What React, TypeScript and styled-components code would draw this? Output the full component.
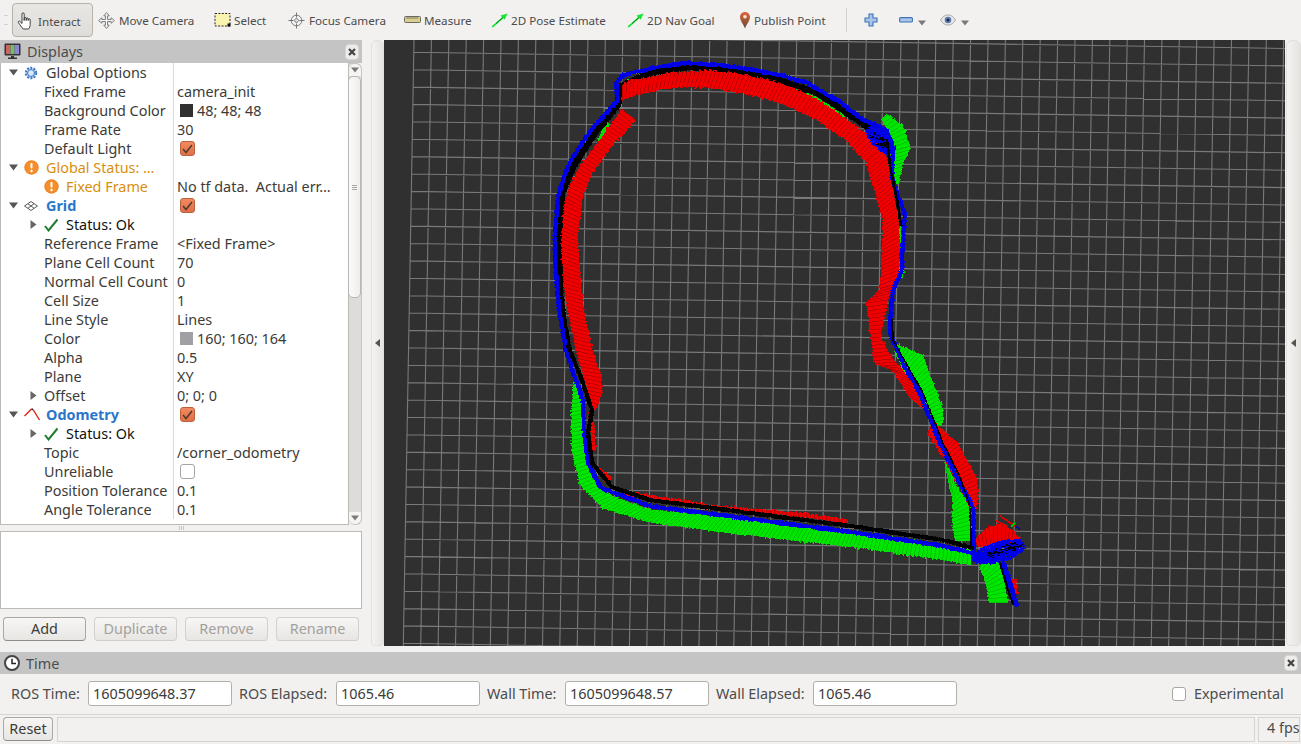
import React from "react";
import styled, { createGlobalStyle } from "styled-components";

type P = [number, number];

const Global = createGlobalStyle`
  html, body { margin: 0; padding: 0; background: #f2f1f0; overflow: hidden; }
  * { box-sizing: border-box; }
  body { font-family: "Noto Sans", "Open Sans", sans-serif; font-size: 14.4px; color: #3c3b37; }
`;

/* ---------- trajectory generation ---------- */
let seed = 12345;
const rnd = () => {
  seed = (seed * 16807) % 2147483647;
  return seed / 2147483647;
};
const length = (pts: P[]) => {
  let l = 0;
  for (let i = 1; i < pts.length; i++) l += Math.hypot(pts[i][0] - pts[i - 1][0], pts[i][1] - pts[i - 1][1]);
  return l;
};
const resample = (pts: P[], n: number): P[] => {
  const total = length(pts);
  const out: P[] = [];
  let seg = 0;
  let acc = 0;
  for (let k = 0; k < n; k++) {
    const target = (total * k) / Math.max(1, n - 1);
    while (seg < pts.length - 2) {
      const d = Math.hypot(pts[seg + 1][0] - pts[seg][0], pts[seg + 1][1] - pts[seg][1]);
      if (acc + d >= target) break;
      acc += d;
      seg++;
    }
    const d = Math.hypot(pts[seg + 1][0] - pts[seg][0], pts[seg + 1][1] - pts[seg][1]) || 1;
    const t = Math.min(1, (target - acc) / d);
    out.push([pts[seg][0] + (pts[seg + 1][0] - pts[seg][0]) * t, pts[seg][1] + (pts[seg + 1][1] - pts[seg][1]) * t]);
  }
  return out;
};
const seg = (a: P, b: P) => `M${a[0].toFixed(1)} ${a[1].toFixed(1)}L${b[0].toFixed(1)} ${b[1].toFixed(1)}`;
const ribbon = (a: P[], b: P[], step = 1, jit = 2.6) => {
  const n = Math.round((length(a) + length(b)) / 2 / step);
  const ra = resample(a, n);
  const rb = resample(b, n);
  let main = "";
  let dark = "";
  ra.forEach((p, i) => {
    const q = rb[i];
    const dx = q[0] - p[0];
    const dy = q[1] - p[1];
    const l = Math.hypot(dx, dy) || 1;
    const e1 = rnd() * rnd() * jit;
    const e2 = rnd() * rnd() * jit;
    const s = seg([p[0] - (dx / l) * e1, p[1] - (dy / l) * e1], [q[0] + (dx / l) * e2, q[1] + (dy / l) * e2]);
    main += s;
    if (i % 4 === 0) dark += s;
  });
  return { main, dark };
};
const band = (pts: P[], width: number, jit = 1.2, step = 1) => {
  const n = Math.round(length(pts) / step);
  const r = resample(pts, n);
  let d = "";
  r.forEach((p, i) => {
    const a = r[Math.max(0, i - 3)];
    const b = r[Math.min(n - 1, i + 3)];
    const l = Math.hypot(b[0] - a[0], b[1] - a[1]) || 1;
    const nx = -(b[1] - a[1]) / l;
    const ny = (b[0] - a[0]) / l;
    const h1 = width / 2 + rnd() * jit;
    const h2 = width / 2 + rnd() * jit;
    d += seg([p[0] - nx * h1, p[1] - ny * h1], [p[0] + nx * h2, p[1] + ny * h2]);
  });
  return d;
};
const scatter = (cx: number, cy: number, rx: number, ry: number, tilt: number, count: number) => {
  let d = "";
  for (let i = 0; i < count; i++) {
    const t = rnd() * Math.PI * 2;
    const r = Math.sqrt(rnd());
    const u = Math.cos(t) * r * rx;
    const v = Math.sin(t) * r * ry;
    const x = cx + u;
    const y = cy + v + u * tilt;
    d += seg([x, y], [x + 1 + rnd() * 2, y + rnd() * 3 - 1.5]);
  }
  return d;
};

const blueLoop: P[] = [
  [973, 553], [943, 546], [850, 532], [750, 519], [650, 506], [601, 488], [588, 463], [584, 430], [583, 400], [573, 372], [566, 350], [559, 310], [555, 263], [555, 237], [558, 197], [564, 177], [571, 160], [591, 130], [618, 100], [616, 83], [623, 75], [653, 68], [687, 63], [720, 65], [753, 70], [780, 75], [807, 83], [840, 102], [860, 118], [887, 130], [893, 153], [892, 177], [898, 197], [905, 213], [902, 250], [902, 270], [893, 290], [891, 310], [890, 333], [903, 363], [920, 393], [940, 443], [957, 477], [973, 507], [974, 560],
];
const blackUpper: P[] = [
  [568, 345], [563, 320], [560, 290], [559.5, 237], [562, 193], [573, 167], [595, 133], [618, 105], [620, 87], [650, 73], [687, 67], [727, 70], [773, 78], [817, 93], [853, 117], [887, 140],
];
const blackBottom: P[] = [
  [973, 548], [943, 540], [850, 526], [750, 513], [650, 500], [612, 487], [592, 463], [588, 433], [592, 410], [583, 383], [568, 345],
];
const blackRight: P[] = [[887, 140], [890, 167], [897, 200], [901, 225]];
const blackLower: P[] = [[892, 320], [893, 340], [906, 363], [923, 393], [943, 443], [960, 477], [970, 507], [971, 545]];

const reds: [P[], P[]][] = [
  [
    [[623, 85], [633, 80], [673, 73], [707, 71], [740, 74], [773, 82], [793, 88], [817, 100], [840, 115], [860, 130], [883, 147]],
    [[622, 100], [640, 93], [673, 87], [707, 87], [740, 92], [773, 100], [813, 117], [847, 140], [867, 162]],
  ],
  [
    [[883, 147], [887, 160], [893, 190], [898, 220], [900, 250], [898, 283], [887, 300]],
    [[867, 162], [873, 183], [883, 220], [883, 250], [880, 290], [867, 303]],
  ],
  [
    [[622, 110], [600, 140], [580, 167], [568, 190], [563, 217], [562, 250], [565, 290], [572, 330], [577, 350], [585, 380], [593, 408]],
    [[635, 120], [612, 145], [592, 172], [582, 197], [577, 237], [580, 280], [585, 320], [592, 350], [600, 375], [602, 393], [595, 410]],
  ],
  [[[887, 300], [880, 337], [893, 360], [913, 383], [922, 407]], [[867, 303], [873, 347], [875, 363], [893, 370], [910, 397]]],
  [[[933, 422], [957, 443], [977, 480], [978, 500], [975, 510]], [[928, 433], [943, 455], [962, 490], [973, 510]]],
  [[[975, 540], [987, 528], [1003, 523], [1020, 538]], [[977, 545], [985, 547], [993, 548], [1018, 540]]],
  [[[597, 467], [612, 478]], [[600, 474], [605, 482]]],
  [[[589, 413], [591, 430], [592, 450]], [[593, 413], [594, 430], [595, 450]]],
  [[[627, 492], [717, 506], [800, 513], [847, 520]], [[627, 495], [717, 509], [800, 516], [847, 523]]],
  [[[1011, 580], [1013, 593]], [[1016, 580], [1017, 593]]],
];
const greens: [P[], P[]][] = [
  [
    [[574, 383], [572, 417], [572, 450], [580, 483], [603, 508], [650, 522], [717, 531], [783, 539], [850, 546], [893, 552], [970, 564]],
    [[579, 383], [584, 417], [584, 450], [594, 477], [611, 496], [650, 510], [717, 517], [783, 525], [850, 532], [893, 538], [970, 550]],
  ],
  [[[897, 345], [922, 355], [943, 410], [942, 425]], [[895, 352], [905, 372], [925, 405], [938, 425]]],
  [[[945, 462], [958, 490], [970, 505], [972, 540]], [[948, 477], [953, 500], [953, 520], [955, 540]]],
  [[[985, 558], [1000, 564], [1008, 602]], [[980, 568], [985, 577], [990, 602]]],
  [[[887, 115], [902, 125], [910, 147], [903, 163], [898, 183]], [[882, 120], [888, 130], [890, 147], [893, 163], [896, 183]]],
  [[[793, 86], [817, 97], [843, 112]], [[790, 90], [813, 102], [845, 122]]],
  [[[626, 82], [640, 77]], [[626, 88], [640, 82]]],
  [[[607, 122], [598, 140]], [[610, 125], [601, 142]]],
  [[[897, 223], [900, 277]], [[900, 223], [903, 277]]],
  [[[563, 205], [563, 215]], [[565, 205], [565, 215]]],
];

const redPaths = reds.map(([a, b]) => ribbon(a, b));
const greenPaths = greens.map(([a, b]) => ribbon(a, b));
const bluePath = band(blueLoop, 2.8, 1.4);
const blackUpperPath = band(blackUpper, 5.5, 1);
const blackBottomPath = band(blackBottom, 3.2, 0.9);
const blackRightPath = band(blackRight, 1.8, 0.8);
const blackLowerPath = band(blackLower, 1, 0.5);
const lowerBlue = band([[1003, 563], [1012, 590], [1017, 606]], 3.5, 1.5);
const lowerBlack = band([[1000, 563], [1008, 590], [1013, 604]], 1.5, 0.5);
const blobBlue = scatter(998, 552, 26, 10, -0.25, 800);
const blobBlack = scatter(1003, 550, 17, 5, -0.3, 70);
const clusterBlue = scatter(880, 140, 14, 11, 0.6, 420);
const clusterBlack = scatter(878, 140, 9, 6, 0.6, 35);
const gridD = (() => {
  let d = "";
  for (let i = 0; i <= 50; i++) d += `M${(414 + 17.394 * i).toFixed(1)} 40L${(403.3 + 17.394 * i).toFixed(1)} 646`;
  for (let j = -1; j <= 34; j++) {
    const y0 = 52.3 + 17.388 * j;
    const xl = 414 - 0.0177 * (y0 - 40);
    d += `M${xl.toFixed(1)} ${(y0 + 0.0156 * (xl - 414)).toFixed(1)}L1285 ${(y0 + 0.0156 * (1285 - 414)).toFixed(1)}`;
  }
  return d;
})();

/* ---------- layout ---------- */
const Page = styled.div`
  width: 1301px;
  height: 744px;
  display: flex;
  flex-direction: column;
  overflow: hidden;
  background: #f2f1f0;
`;
const Toolbar = styled.div`
  height: 40px;
  display: flex;
  align-items: center;
  flex: none;
`;
const Grip = styled.div`
  width: 12px;
  height: 10px;
  padding-left: 4px;
  display: flex;
  flex-direction: column;
  justify-content: space-between;
  &::before, &::after { content: ""; width: 4px; height: 1px; background: #d5d3cf; }
`;
const ToolButton = styled.div<{ $w: number; $active?: boolean; $gap?: number }>`
  width: ${(p) => p.$w}px;
  height: 34px;
  display: flex;
  align-items: center;
  gap: ${(p) => p.$gap ?? 4}px;
  padding-left: ${(p) => (p.$active ? 4 : 5)}px;
  white-space: nowrap;
  color: #4c4c4c;
  font-size: 11.65px;
  flex: none;
  ${(p) =>
    p.$active &&
    `border: 1px solid #b5b2ac; border-radius: 4px; background: linear-gradient(#e9e7e4, #dfddd9); padding-top: 2px;`}
`;
const IconSlot = styled.span`
  width: 17px;
  height: 18px;
  flex: none;
  display: flex;
  align-items: center;
  justify-content: center;
`;
const ToolSep = styled.div`
  width: 1px;
  height: 24px;
  background: #d4d2ce;
  margin: 0 17px 0 5px;
  flex: none;
`;
const ToolIcon = styled.div<{ $w: number }>`
  width: ${(p) => p.$w}px;
  flex: none;
  display: flex;
  align-items: center;
  gap: 5px;
`;
const DropSlot = styled.span`
  display: flex;
  margin-top: 6px;
`;
const Main = styled.div`
  height: 606px;
  margin-bottom: 6px;
  display: flex;
  flex: none;
`;
const LeftPanel = styled.div`
  width: 362px;
  flex: none;
  display: flex;
  flex-direction: column;
`;
const DockTitle = styled.div<{ $h: number }>`
  height: ${(p) => p.$h}px;
  flex: none;
  background: #c4c4c4;
  display: flex;
  align-items: center;
  padding: 0 3px 0 4px;
  gap: 6px;
  color: #4c4c4c;
`;
const CloseBox = styled.div`
  margin-left: auto;
  width: 14px;
  height: 16px;
  border-radius: 4px;
  background: #efedeb;
  border: 1px solid #d8d6d2;
  display: flex;
  align-items: center;
  justify-content: center;
`;
const TreeFrame = styled.div`
  height: 462px;
  flex: none;
  display: flex;
`;
const Tree = styled.div`
  width: 349px;
  flex: none;
  background: #fff;
  border: 1px solid #bdbab5;
  border-top: 0;
  overflow: hidden;
`;
const Row = styled.div`
  height: 19px;
  display: grid;
  grid-template-columns: 173px 1fr;
`;
const NameCell = styled.div<{ $depth: number }>`
  display: flex;
  align-items: center;
  padding-left: ${(p) => p.$depth * 20 + 4}px;
  border-right: 1px solid #dcdad6;
  white-space: nowrap;
  overflow: hidden;
`;
const Expander = styled.span`
  width: 16px;
  flex: none;
  display: flex;
  justify-content: center;
  align-items: center;
`;
const IconCell = styled.span`
  width: 25px;
  height: 19px;
  flex: none;
  display: flex;
  align-items: center;
  padding-left: 3px;
`;
const Label = styled.span<{ $tone?: string; $plain?: boolean }>`
  white-space: pre;
  margin-left: ${(p) => (p.$plain ? 3 : 0)}px;
  color: ${(p) => (p.$tone === "warn" ? "#d98f0e" : p.$tone === "blue" ? "#2a76cc" : p.$tone === "ok" ? "#111" : "#3c3b37")};
  font-weight: ${(p) => (p.$tone === "blue" ? 700 : 400)};
`;
const ValueCell = styled.div`
  display: flex;
  align-items: center;
  padding-left: 3px;
  white-space: pre;
  overflow: hidden;
`;
const Swatch = styled.span<{ $c: string }>`
  width: 13px;
  height: 13px;
  background: ${(p) => p.$c};
  margin: 0 4px 0 3px;
  flex: none;
`;
const CheckBox = styled.span<{ $on?: boolean }>`
  width: 15px;
  height: 15px;
  margin-left: 3px;
  border-radius: 3px;
  flex: none;
  display: flex;
  align-items: center;
  justify-content: center;
  border: 1px solid ${(p) => (p.$on ? "#b9603c" : "#a9a6a1")};
  background: ${(p) => (p.$on ? "linear-gradient(#f08a60, #e26f45)" : "#fff")};
`;
const Scrollbar = styled.div`
  width: 13px;
  flex: none;
  display: flex;
  flex-direction: column;
  border: 1px solid #c9c6c1;
  border-left: 0;
  border-radius: 0 6px 6px 6px;
  background: #dedcd8;
`;
const ScrollEnd = styled.div<{ $flip?: boolean }>`
  height: 12px;
  background: #f6f5f4;
  flex: none;
  display: flex;
  align-items: center;
  justify-content: center;
  border-radius: ${(p) => (p.$flip ? "0 0 6px 6px" : "6px 6px 0 0")};
`;
const ScrollThumb = styled.div`
  height: 222px;
  flex: none;
  border: 1px solid #b9b6b1;
  border-radius: 5px;
  background: linear-gradient(90deg, #fafafa, #efedeb);
  display: flex;
  flex-direction: column;
  justify-content: center;
  align-items: center;
  gap: 1px;
  margin-left: -1px;
  width: 13px;
`;
const GripLine = styled.span`
  width: 5px;
  height: 1px;
  background: #a9a6a1;
`;
const ScrollRest = styled.div`
  flex: 1;
`;
const Splitter = styled.div`
  height: 6px;
  flex: none;
  display: flex;
  justify-content: center;
  gap: 1px;
  align-items: center;
  & > span { width: 1px; height: 4px; background: #c9c6c1; }
`;
const DescBox = styled.div`
  height: 78px;
  flex: none;
  background: #fff;
  border: 1px solid #bdbab5;
`;
const ButtonRow = styled.div`
  margin-top: 8px;
  display: flex;
  gap: 8px;
  padding-left: 3px;
`;
const PushButton = styled.div<{ $off?: boolean; $w?: number; $h?: number }>`
  width: ${(p) => p.$w ?? 83}px;
  height: ${(p) => p.$h ?? 24}px;
  flex: none;
  display: flex;
  align-items: center;
  justify-content: center;
  padding-bottom: 1px;
  border-radius: 4px;
  border: 1px solid ${(p) => (p.$off ? "#d3d1cd" : "#aaa7a2")};
  border-bottom-color: ${(p) => (p.$off ? "#cfcdc9" : "#8f8c87")};
  background: linear-gradient(#f7f6f5, #e8e6e3);
  color: ${(p) => (p.$off ? "#a3a19d" : "#3c3b37")};
`;
const SideHandle = styled.div<{ $w: number; $pad: number }>`
  width: ${(p) => p.$w}px;
  flex: none;
  padding-left: ${(p) => p.$pad}px;
`;
const HandleBar = styled.div`
  height: 100%;
  border: 1px solid #e2e0dc;
  border-radius: 6px 6px 4px 4px;
  background: linear-gradient(90deg, #f4f3f2, #e6e4e1);
  display: flex;
  align-items: center;
  justify-content: center;
`;
const Viewport = styled.svg`
  width: 901px;
  height: 606px;
  flex: none;
  display: block;
  background: #303030;
`;
const TimeRow = styled.div`
  margin-top: 7px;
  height: 25px;
  flex: none;
  display: flex;
  align-items: center;
  padding-left: 11px;
`;
const TimeLabel = styled.span<{ $w: number }>`
  width: ${(p) => p.$w}px;
  flex: none;
  color: #4c4c4c;
  white-space: nowrap;
`;
const TimeField = styled.div`
  width: 144px;
  height: 25px;
  flex: none;
  margin-right: 7px;
  background: #fff;
  border: 1px solid #b3b0ab;
  border-radius: 3px;
  padding-left: 4px;
  display: flex;
  align-items: center;
  color: #3c3b37;
`;
const Experimental = styled.div`
  margin-left: auto;
  width: 129px;
  display: flex;
  align-items: center;
  gap: 8px;
  color: #4c4c4c;
`;
const PlainBox = styled.span`
  width: 14px;
  height: 14px;
  border: 1px solid #a9a6a1;
  border-radius: 3px;
  background: #fff;
  flex: none;
`;
const StatusBar = styled.div`
  margin-top: 8px;
  border-top: 1px solid #d6d4d0;
  height: 30px;
  flex: none;
  display: flex;
  padding: 2px 1px 0 3px;
`;
const StatusField = styled.div`
  margin-left: 4px;
  width: 1198px;
  height: 25px;
  border: 1px solid #d6d4d0;
  flex: none;
`;
const FpsBox = styled.div`
  margin-left: 3px;
  width: 42px;
  height: 25px;
  border: 1px solid #d6d4d0;
  flex: none;
  padding: 0 0 4px 8px;
  display: flex;
  align-items: center;
  white-space: nowrap;
  color: #4c4c4c;
`;

/* ---------- icons ---------- */
const Hand = () => (
  <svg width="17" height="18" viewBox="0 0 17 18" fill="#fff" stroke="#222" strokeWidth="0.85" strokeLinejoin="round">
    <path d="M5 2a1.100 1.100 0 0 1 2.200 0v6.500V6.400a1 1 0 0 1 2 0v2.100V7a1 1 0 0 1 2 0v1.500V7.800a1 1 0 0 1 2 0v4.700c0 2-.8 3.500-1.700 4.500H6.200C5 15.500 3 13 1.400 10.600c-.6-1 .6-2 1.400-1.200L5 11.500z" />
  </svg>
);
const MoveIcon = () => (
  <svg width="17" height="17" viewBox="0 0 16 16" fill="#f4f4f4" stroke="#777" strokeWidth="0.9">
    <path d="M8 .6 5.4 3.6H7V7H3.6V5.4L.6 8l3 2.6V9H7v3.4H5.4L8 15.400l2.600-3H9V9h3.400v1.600l3-2.600-3-2.600V7H9V3.600h1.600z" />
  </svg>
);
const SelectIcon = () => (
  <svg width="17" height="16" viewBox="0 0 17 16">
    <rect x="1" y="1.5" width="15" height="12.5" fill="#fbf4b0" stroke="#222" strokeDasharray="2 1.4" />
    <rect x="13.5" y="11.5" width="3" height="3" fill="#111" />
  </svg>
);
const FocusIcon = () => (
  <svg width="17" height="17" viewBox="0 0 17 17" fill="none" stroke="#777">
    <circle cx="8.5" cy="8.5" r="5.3" fill="#f5f5f5" />
    <path d="M8.5 .5v5M8.5 11.5v5M.5 8.5h5M11.5 8.5h5" />
    <path d="M8.5 6 11 8.5 8.5 11 6 8.5z" fill="#ddd" />
  </svg>
);
const RulerIcon = () => (
  <svg width="17" height="8" viewBox="0 0 17 8">
    <rect x=".5" y=".5" width="16" height="6" rx="1" fill="#d9d08e" stroke="#6b6a60" />
    <path d="M3 1v2M5 1v2M7 1v2M9 1v2M11 1v2M13 1v2" stroke="#6b6a60" strokeWidth=".8" />
  </svg>
);
const ArrowIcon = () => (
  <svg width="17" height="15" viewBox="0 0 17 15">
    <path d="M.5 13.500 11 4.300 9.600 2.600 16.500.5l-2.800 6.200-1.400-1.400L2 14.500z" fill="#14e830" />
    <path d="M5 10.500 12 4.500" stroke="#0a7a1e" strokeWidth=".9" />
  </svg>
);
const PinIcon = () => (
  <svg width="14" height="18" viewBox="0 0 14 18">
    <defs>
      <linearGradient id="pin" x1="0" y1="0" x2="0" y2="1">
        <stop offset="0" stopColor="#e2663a" />
        <stop offset="1" stopColor="#5f4a35" />
      </linearGradient>
    </defs>
    <path d="M7 1C4 1 2 3.200 2 6c0 3.600 3.600 7.600 5 11.500C8.400 13.600 12 9.600 12 6c0-2.800-2-5-5-5z" fill="url(#pin)" />
    <circle cx="7" cy="5.800" r="1.800" fill="#f6e3d6" />
  </svg>
);
const PlusIcon = () => (
  <svg width="14" height="14" viewBox="0 0 14 14">
    <path d="M5 1h4v4h4v4H9v4H5V9H1V5h4z" fill="#a9c6ea" stroke="#3d72b4" strokeWidth="1.1" />
  </svg>
);
const MinusIcon = () => (
  <svg width="14" height="6" viewBox="0 0 14 6">
    <rect x=".6" y=".6" width="12.8" height="4.4" rx="1" fill="#a9c6ea" stroke="#3d72b4" strokeWidth="1.1" />
  </svg>
);
const EyeIcon = () => (
  <svg width="16" height="12" viewBox="0 0 16 12">
    <path d="M.5 6C3 2 5.500 1 8 1s5 1 7.500 5C13 10 10.500 11 8 11S3 10 .5 6z" fill="#e6e6e6" stroke="#a8a8a8" />
    <circle cx="8" cy="6" r="3.300" fill="#5f7fb4" />
    <circle cx="8" cy="6" r="1.500" fill="#1b2a4a" />
  </svg>
);
const Drop = () => (
  <svg width="8" height="6" viewBox="0 0 8 6">
    <path d="M0 .5h8L4 5.500z" fill="#7a7a7a" />
  </svg>
);
const Monitor = () => (
  <svg width="17" height="17" viewBox="0 0 17 17">
    <rect x=".5" y=".5" width="16" height="12" rx="1" fill="#333" />
    <rect x="2" y="2" width="4.500" height="9" fill="#c66" />
    <rect x="6.500" y="2" width="4" height="9" fill="#7b6" />
    <rect x="10.500" y="2" width="4.500" height="9" fill="#88c" />
    <path d="M7 13h3v1.500h3V16H4v-1.500h3z" fill="#333" />
  </svg>
);
const Clock = () => (
  <svg width="16" height="16" viewBox="0 0 16 16">
    <circle cx="8" cy="8" r="7" fill="#fff" stroke="#444" strokeWidth="2" />
    <path d="M8 3.800V8.500h4" fill="none" stroke="#222" strokeWidth="1.500" />
  </svg>
);
const Cross = () => (
  <svg width="8" height="8" viewBox="0 0 8 8">
    <path d="M1 1l6 6M7 1 1 7" stroke="#444" strokeWidth="2.200" />
  </svg>
);
const Down = () => (
  <svg width="9" height="7" viewBox="0 0 9 7">
    <path d="M0 .5h9L4.500 6.500z" fill="#555" />
  </svg>
);
const Right = () => (
  <svg width="7" height="9" viewBox="0 0 7 9">
    <path d="M.5 0v9l6-4.500z" fill="#666" />
  </svg>
);
const Gear = () => (
  <svg width="14" height="14" viewBox="0 0 14 14">
    <circle cx="7" cy="7" r="5.200" fill="#cfe0f5" stroke="#3c78c8" strokeWidth="2" strokeDasharray="2 1.300" />
    <circle cx="7" cy="7" r="3.500" fill="none" stroke="#3c78c8" />
    <circle cx="7" cy="7" r="2" fill="#dfeafa" />
  </svg>
);
const Warn = () => (
  <svg width="15" height="15" viewBox="0 0 15 15">
    <circle cx="7.500" cy="7.500" r="7.200" fill="#f08020" />
    <circle cx="7.500" cy="7.500" r="6" fill="#f58f2e" />
    <rect x="6.500" y="3" width="2" height="5.500" rx=".8" fill="#fff" />
    <circle cx="7.500" cy="11" r="1.200" fill="#fff" />
  </svg>
);
const GridIcon = () => (
  <svg width="14" height="10" viewBox="0 0 14 10" fill="none" stroke="#444" strokeWidth=".9">
    <path d="M7 .5 13.500 5 7 9.500.5 5zM4 2.800 10 7.200M10 2.800 4 7.200" />
  </svg>
);
const OdomIcon = () => (
  <svg width="17" height="13" viewBox="0 0 17 13" fill="none" strokeWidth="1.4">
    <path d="M.5 8 7.500 1" stroke="#f02010" />
    <path d="M9 1.500 15.500 12" stroke="#e02010" />
    <path d="M7.500 1 9 1.500" stroke="#222" />
  </svg>
);
const Tick = () => (
  <svg width="15" height="14" viewBox="0 0 15 14">
    <path d="M1 8l3.500 4.500L13.500 1.500" fill="none" stroke="#1e7d2e" strokeWidth="2" />
  </svg>
);
const BoxTick = () => (
  <svg width="11" height="10" viewBox="0 0 11 10">
    <path d="M1 5l3 3.500L10 1" fill="none" stroke="#4c3a32" strokeWidth="1.500" />
  </svg>
);
const Tri = () => (
  <svg width="5" height="8" viewBox="0 0 5 8">
    <path d="M5 0v8L0 4z" fill="#55534f" />
  </svg>
);

/* ---------- data ---------- */
type RowDef = {
  name: string;
  depth: number;
  open?: "down" | "right";
  icon?: React.ReactNode;
  tone?: string;
  value?: string;
  swatch?: string;
  check?: "on" | "off";
};
const rows: RowDef[] = [
  { name: "Global Options", depth: 0, open: "down", icon: <Gear /> },
  { name: "Fixed Frame", depth: 1, value: "camera_init" },
  { name: "Background Color", depth: 1, value: "48; 48; 48", swatch: "#303030" },
  { name: "Frame Rate", depth: 1, value: "30" },
  { name: "Default Light", depth: 1, check: "on" },
  { name: "Global Status: …", depth: 0, open: "down", icon: <Warn />, tone: "warn" },
  { name: "Fixed Frame", depth: 1, icon: <Warn />, tone: "warn", value: "No tf data.  Actual err…" },
  { name: "Grid", depth: 0, open: "down", icon: <GridIcon />, tone: "blue", check: "on" },
  { name: "Status: Ok", depth: 1, open: "right", icon: <Tick />, tone: "ok" },
  { name: "Reference Frame", depth: 1, value: "<Fixed Frame>" },
  { name: "Plane Cell Count", depth: 1, value: "70" },
  { name: "Normal Cell Count", depth: 1, value: "0" },
  { name: "Cell Size", depth: 1, value: "1" },
  { name: "Line Style", depth: 1, value: "Lines" },
  { name: "Color", depth: 1, value: "160; 160; 164", swatch: "#a0a0a4" },
  { name: "Alpha", depth: 1, value: "0.5" },
  { name: "Plane", depth: 1, value: "XY" },
  { name: "Offset", depth: 1, open: "right", value: "0; 0; 0" },
  { name: "Odometry", depth: 0, open: "down", icon: <OdomIcon />, tone: "blue", check: "on" },
  { name: "Status: Ok", depth: 1, open: "right", icon: <Tick />, tone: "ok" },
  { name: "Topic", depth: 1, value: "/corner_odometry" },
  { name: "Unreliable", depth: 1, check: "off" },
  { name: "Position Tolerance", depth: 1, value: "0.1" },
  { name: "Angle Tolerance", depth: 1, value: "0.1" },
];

const tools: { label: string; w: number; icon: React.ReactNode; active?: boolean; gap?: number }[] = [
  { label: "Interact", w: 81, icon: <Hand />, active: true },
  { label: "Move Camera", w: 116, icon: <MoveIcon /> },
  { label: "Select", w: 74, icon: <SelectIcon />, gap: 3 },
  { label: "Focus Camera", w: 116, icon: <FocusIcon /> },
  { label: "Measure", w: 87, icon: <RulerIcon />, gap: 3 },
  { label: "2D Pose Estimate", w: 136, icon: <ArrowIcon />, gap: 3 },
  { label: "2D Nav Goal", w: 109, icon: <ArrowIcon />, gap: 3 },
  { label: "Publish Point", w: 110, icon: <PinIcon />, gap: 1 },
];

const TreeRow = ({ r }: { r: RowDef }) => (
  <Row>
    <NameCell $depth={r.depth}>
      <Expander>{r.open === "down" ? <Down /> : r.open === "right" ? <Right /> : null}</Expander>
      {r.icon ? <IconCell>{r.icon}</IconCell> : null}
      <Label $tone={r.tone} $plain={!r.icon}>
        {r.name}
      </Label>
    </NameCell>
    <ValueCell>
      {r.swatch ? <Swatch $c={r.swatch} /> : null}
      {r.check ? <CheckBox $on={r.check === "on"}>{r.check === "on" ? <BoxTick /> : null}</CheckBox> : null}
      {r.value ? <Label>{r.value}</Label> : null}
    </ValueCell>
  </Row>
);

const Scene = () => (
  <Viewport viewBox="384 40 901 606">
    <path d={gridD} stroke="#a0a0a4" strokeOpacity="0.66" strokeWidth="1.1" fill="none" />
    <g fill="none" shapeRendering="crispEdges">
      {greenPaths.map((p, i) => (
        <g key={i}>
          <path d={p.main} stroke="#00e600" strokeWidth="1.4" />
          <path d={p.dark} stroke="#00bb00" strokeWidth="0.8" />
        </g>
      ))}
      <path d={blackUpperPath} stroke="#000" strokeWidth="1.4" />
      {redPaths.map((p, i) => (
        <g key={i}>
          <path d={p.main} stroke="#f00000" strokeWidth="1.4" />
          <path d={p.dark} stroke="#b80000" strokeWidth="0.8" />
        </g>
      ))}
      <path d={blobBlue} stroke="#0000e6" strokeWidth="1.6" />
      <path d={clusterBlue} stroke="#0000e6" strokeWidth="1.6" />
      <path d={bluePath} stroke="#0000e6" strokeWidth="1.4" />
      <path d={lowerBlue} stroke="#0000e6" strokeWidth="1.4" />
      <path d={blobBlack} stroke="#000" strokeWidth="1" />
      <path d={clusterBlack} stroke="#000" strokeWidth="1" />
      <path d={blackBottomPath} stroke="#000" strokeWidth="1.4" />
      <path d={blackRightPath} stroke="#000" strokeWidth="1.4" />
      <path d={blackLowerPath} stroke="#000" strokeWidth="1.4" />
      <path d={lowerBlack} stroke="#000" strokeWidth="1.4" />
      <path d="M1000 516 1015 526M995 520 1007 527" stroke="#e00000" strokeWidth="1.5" />
      <path d="M1011 527 1015 523" stroke="#00c000" strokeWidth="1.5" />
      <path d="M1015 526 1020 529" stroke="#0000a0" strokeWidth="1.5" />
    </g>
  </Viewport>
);

export default function App() {
  return (
    <Page>
      <Global />
      <Toolbar>
        <Grip />
        {tools.map((t) => (
          <ToolButton key={t.label} $w={t.w} $active={t.active} $gap={t.gap}>
            <IconSlot>{t.icon}</IconSlot>
            {t.label}
          </ToolButton>
        ))}
        <ToolSep />
        <ToolIcon $w={35}>
          <PlusIcon />
        </ToolIcon>
        <ToolIcon $w={41}>
          <MinusIcon />
          <DropSlot>
            <Drop />
          </DropSlot>
        </ToolIcon>
        <ToolIcon $w={30}>
          <EyeIcon />
          <DropSlot>
            <Drop />
          </DropSlot>
        </ToolIcon>
      </Toolbar>
      <Main>
        <LeftPanel>
          <DockTitle $h={23}>
            <Monitor />
            Displays
            <CloseBox>
              <Cross />
            </CloseBox>
          </DockTitle>
          <TreeFrame>
            <Tree>
              {rows.map((r, i) => (
                <TreeRow key={i} r={r} />
              ))}
            </Tree>
            <Scrollbar>
              <ScrollEnd>
                <Drop />
              </ScrollEnd>
              <ScrollThumb>
                <GripLine />
                <GripLine />
                <GripLine />
              </ScrollThumb>
              <ScrollRest />
              <ScrollEnd $flip>
                <Drop />
              </ScrollEnd>
            </Scrollbar>
          </TreeFrame>
          <Splitter>
            <span />
            <span />
            <span />
          </Splitter>
          <DescBox />
          <ButtonRow>
            <PushButton>Add</PushButton>
            <PushButton $off>Duplicate</PushButton>
            <PushButton $off>Remove</PushButton>
            <PushButton $off>Rename</PushButton>
          </ButtonRow>
        </LeftPanel>
        <SideHandle $w={22} $pad={9}>
          <HandleBar>
            <Tri />
          </HandleBar>
        </SideHandle>
        <Scene />
        <SideHandle $w={16} $pad={1}>
          <HandleBar>
            <Tri />
          </HandleBar>
        </SideHandle>
      </Main>
      <DockTitle $h={22}>
        <Clock />
        Time
        <CloseBox>
          <Cross />
        </CloseBox>
      </DockTitle>
      <TimeRow>
        <TimeLabel $w={77}>ROS Time:</TimeLabel>
        <TimeField>1605099648.37</TimeField>
        <TimeLabel $w={97}>ROS Elapsed:</TimeLabel>
        <TimeField>1065.46</TimeField>
        <TimeLabel $w={78}>Wall Time:</TimeLabel>
        <TimeField>1605099648.57</TimeField>
        <TimeLabel $w={97}>Wall Elapsed:</TimeLabel>
        <TimeField>1065.46</TimeField>
        <Experimental>
          <PlainBox />
          Experimental
        </Experimental>
      </TimeRow>
      <StatusBar>
        <PushButton $w={50} $h={24}>
          Reset
        </PushButton>
        <StatusField />
        <FpsBox>4 fps</FpsBox>
      </StatusBar>
    </Page>
  );
}
